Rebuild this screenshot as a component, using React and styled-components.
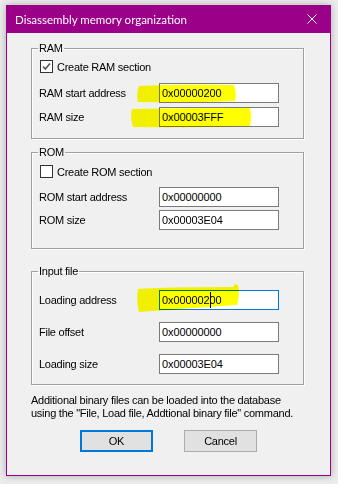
import React from 'react'
import styled, { createGlobalStyle } from 'styled-components'

const GlobalStyle = createGlobalStyle`
  html, body {
    margin: 0;
    padding: 0;
    background: #ececec;
  }
  body {
    font-family: "Liberation Sans", Arial, sans-serif;
    font-size: 11px;
    letter-spacing: -0.25px;
    color: #000;
  }
`

const Desktop = styled.div`
  width: 338px;
  height: 484px;
  padding: 5px 0 0 6px;
  box-sizing: border-box;
`
const Window = styled.div`
  width: 325px;
  height: 471px;
  box-sizing: border-box;
  border: 1px solid #9b0088;
  border-top: none;
  background: #f0f0f0;
  box-shadow: 0 0 7px rgba(0, 0, 0, 0.28);
  display: flex;
  flex-direction: column;
`
const TitleBar = styled.div`
  height: 28px;
  margin: 0 -1px;
  background: #9b0088;
  display: flex;
  align-items: center;
  justify-content: space-between;
  padding: 0 14px 0 9px;
  color: #fff;
`
const Title = styled.span`
  font-family: Lato, "Noto Sans", sans-serif;
  font-size: 11.5px;
  letter-spacing: 0;
`
const Body = styled.div`
  padding: 9px 0 0 24px;
  display: flex;
  flex-direction: column;
`
const Group = styled.fieldset`
  margin: ${p => p.$top}px 0 0 0;
  width: 273px;
  box-sizing: border-box;
  border: 1px solid #a0a0a0;
  box-shadow: 1px 1px 0 #fff, inset 1px 1px 0 #fff;
  padding: ${p => p.$pt}px 0 ${p => p.$pb}px 7px;
  min-inline-size: 0;
  display: flex;
  flex-direction: column;
  gap: ${p => p.$gap}px;
`
const Legend = styled.legend`
  padding: 0 1px;
  margin-left: -1px;
  line-height: 13px;
`
const CheckRow = styled.label`
  display: flex;
  align-items: center;
  gap: 4px;
  height: 13px;
  margin-left: 1px;
  margin-bottom: 6px;
`
const Box = styled.span`
  width: 13px;
  height: 13px;
  box-sizing: border-box;
  border: 1px solid #333;
  background: #fff;
  display: flex;
  align-items: center;
  justify-content: center;
`
const Row = styled.div`
  display: flex;
  align-items: center;
  height: 20px;
`
const Label = styled.span`
  width: 120px;
`
const FieldWrap = styled.div`
  position: relative;
  width: 120px;
  height: 20px;
`
const Field = styled.div`
  width: 120px;
  height: 20px;
  box-sizing: border-box;
  border: 1px solid ${p => (p.$focus ? '#0078d7' : '#7a7a7a')};
  background: #fff;
  padding: 0 0 0 2px;
  display: flex;
  align-items: center;
  white-space: pre;
  letter-spacing: -0.1px;
`
const Caret = styled.span`
  display: inline-block;
  width: 1px;
  height: 16px;
  background: #000;
  margin: 0 -1px 0 0;
`
const Marker = styled.svg`
  position: absolute;
  pointer-events: none;
  mix-blend-mode: multiply;
  overflow: visible;
`
const Note = styled.p`
  margin: 9px 0 0 0;
  line-height: 13px;
`
const Buttons = styled.div`
  display: flex;
  gap: 31px;
  margin: 10px 0 0 49px;
`
const Button = styled.button`
  width: 73px;
  height: 22px;
  box-sizing: border-box;
  font: inherit;
  letter-spacing: inherit;
  color: #000;
  background: #e1e1e1;
  border: ${p => (p.$default ? '2px solid #0078d7' : '1px solid #adadad')};
  padding: 0;
`

const Check = ({ checked, children }) => (
  <CheckRow>
    <Box>
      {checked && (
        <svg width="9" height="9" viewBox="0 0 9 9">
          <path d="M1 4.5 L3.3 7 L8 1.5" fill="none" stroke="#555" strokeWidth="1.6" />
        </svg>
      )}
    </Box>
    {children}
  </CheckRow>
)

// hand drawn marker strokes over the fields
const MARKS = {
  start: { left: -23, top: 1, w: 101, h: 18, d: 'M3 2 Q40 0 98 1 Q101 9 99 17 Q50 19 2 18 Q0 10 3 2 Z' },
  size: { left: -29, top: 1, w: 122, h: 19, d: 'M2 1 Q60 0 120 0 Q122 10 120 18 Q60 20 3 19 Q0 10 2 1 Z' },
  load: { left: -23, top: -4, w: 105, h: 26, d: 'M2 3 Q30 1 97 1 L99 -2 L102 -1 Q104 8 101 19 Q70 21 3 26 Q0 14 2 3 Z' },
}

const Input = ({ value, caret, focus, mark }) => {
  const m = MARKS[mark]
  return (
    <FieldWrap>
      <Field $focus={focus}>
        {caret != null ? (
          <>
            {value.slice(0, caret)}
            <Caret />
            {value.slice(caret)}
          </>
        ) : value}
      </Field>
      {m && (
        <Marker width={m.w} height={m.h} style={{ left: m.left, top: m.top }} viewBox={`0 0 ${m.w} ${m.h}`}>
          <path d={m.d} fill="#ffff00" />
        </Marker>
      )}
    </FieldWrap>
  )
}

const GROUPS = [
  {
    title: 'RAM', top: 0, pt: 5, pb: 11, gap: 4,
    check: { label: 'Create RAM section', checked: true },
    rows: [
      { label: 'RAM start address', value: '0x00000200', mark: 'start' },
      { label: 'RAM size', value: '0x00003FFF', mark: 'size' },
    ],
  },
  {
    title: 'ROM', top: 7, pt: 6, pb: 18, gap: 3,
    check: { label: 'Create ROM section', checked: false },
    rows: [
      { label: 'ROM start address', value: '0x00000000' },
      { label: 'ROM size', value: '0x00003E04' },
    ],
  },
  {
    title: 'Input file', top: 16, pt: 12, pb: 10, gap: 12,
    rows: [
      { label: 'Loading address', value: '0x00000200', mark: 'load', focus: true, caret: 8 },
      { label: 'File offset', value: '0x00000000' },
      { label: 'Loading size', value: '0x00003E04' },
    ],
  },
]

export default function App() {
  return (
    <Desktop>
      <GlobalStyle />
      <Window>
        <TitleBar>
          <Title>Disassembly memory organization</Title>
          <svg width="10" height="10" viewBox="0 0 10 10">
            <path d="M0.5 0.5 L9.5 9.5 M9.5 0.5 L0.5 9.5" stroke="#fff" strokeWidth="1" />
          </svg>
        </TitleBar>
        <Body>
          {GROUPS.map(g => (
            <Group key={g.title} $top={g.top} $pt={g.pt} $pb={g.pb} $gap={g.gap}>
              <Legend>{g.title}</Legend>
              {g.check && <Check checked={g.check.checked}>{g.check.label}</Check>}
              {g.rows.map(r => (
                <Row key={r.label}>
                  <Label>{r.label}</Label>
                  <Input value={r.value} mark={r.mark} focus={r.focus} caret={r.caret} />
                </Row>
              ))}
            </Group>
          ))}
          <Note>
            Additional binary files can be loaded into the database<br />
            using the "File, Load file, Addtional binary file" command.
          </Note>
          <Buttons>
            <Button $default>OK</Button>
            <Button>Cancel</Button>
          </Buttons>
        </Body>
      </Window>
    </Desktop>
  )
}
